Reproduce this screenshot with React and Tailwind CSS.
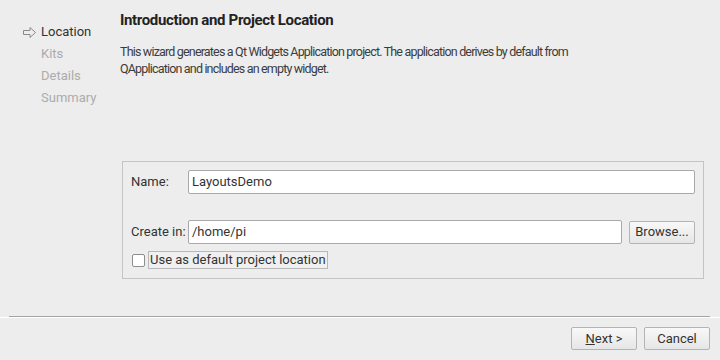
const font = { fontFamily: 'Roboto, "Liberation Sans", sans-serif' };

function Arrow() {
  return (
    <svg width="15" height="13" viewBox="0 0 15 13" className="mr-[4px]">
      <path
        d="M1.5 4.5 H8 V1.5 L13.5 6.5 L8 11.5 V8.5 H1.5 Z"
        fill="none"
        stroke="#8a8a8a"
        strokeWidth="1"
        strokeLinejoin="round"
      />
    </svg>
  );
}

function Button({ children, className = '' }) {
  return (
    <div
      className={`flex items-center justify-center h-[23px] rounded-[2px] border border-[#b4b4b4] bg-gradient-to-b from-[#f8f8f8] to-[#e6e6e6] text-[13px] text-[#333] ${className}`}
    >
      {children}
    </div>
  );
}

function Field({ value, className = '' }) {
  return (
    <div
      className={`flex items-center h-[24px] rounded-[2px] border border-[#a9a9a9] bg-white pl-[3px] text-[13px] text-[#333] ${className}`}
    >
      {value}
    </div>
  );
}

export default function App() {
  return (
    <div className="w-[720px] h-[360px] bg-[#ededed] flex flex-col" style={font}>
      <div className="flex h-[316px]">
        <div className="w-[120px] pl-[22px] pt-[21px] text-[13px] leading-[22px]">
          <div className="flex items-center text-[#333]">
            <Arrow />
            Location
          </div>
          <div className="pl-[19px] text-[#acacac]">Kits</div>
          <div className="pl-[19px] text-[#acacac]">Details</div>
          <div className="pl-[19px] text-[#acacac]">Summary</div>
        </div>
        <div className="w-[584px] flex flex-col">
          <h1 className="pt-[11px] text-[15px] leading-[19px] font-bold tracking-[-0.35px] text-[#222]">
            Introduction and Project Location
          </h1>
          <p className="mt-[13px] text-[12.5px] leading-[17px] tracking-[-0.82px] text-[#3c3c3c]">
            This wizard generates a Qt Widgets Application project. The application derives by default from
            <br />
            QApplication and includes an empty widget.
          </p>
          <div className="mt-[84px] ml-[2px] h-[118px] border border-[#c4c4c4] pl-[8px] pr-[8px] pt-[8px] text-[13px] text-[#333]">
            <div className="flex items-center h-[24px]">
              <span className="w-[57px]">Name:</span>
              <Field value="LayoutsDemo" className="flex-1" />
            </div>
            <div className="flex items-center h-[24px] mt-[26px]">
              <span className="w-[57px]">Create in:</span>
              <Field value="/home/pi" className="flex-1" />
              <Button className="w-[66px] ml-[7px]">Browse...</Button>
            </div>
            <div className="flex items-center h-[18px] mt-[7px]">
              <div className="w-[13px] h-[13px] ml-[1px] rounded-[2px] border border-[#8e8e8e] bg-white" />
              <span className="ml-[3px] h-[18px] px-[1px] flex items-center border border-[#b8b8b8] bg-[#f0f0f0]">
                Use as default project location
              </span>
            </div>
          </div>
        </div>
      </div>
      <div className="mx-[9px] h-px bg-[#a4a4a4] w-[701px]" />
      <div className="h-px bg-white" />
      <div className="flex justify-end pr-[10px] pt-[9px] gap-[7px]">
        <Button className="w-[66px]">
          <span>
            <span className="underline">N</span>ext &gt;
          </span>
        </Button>
        <Button className="w-[66px]">Cancel</Button>
      </div>
    </div>
  );
}
